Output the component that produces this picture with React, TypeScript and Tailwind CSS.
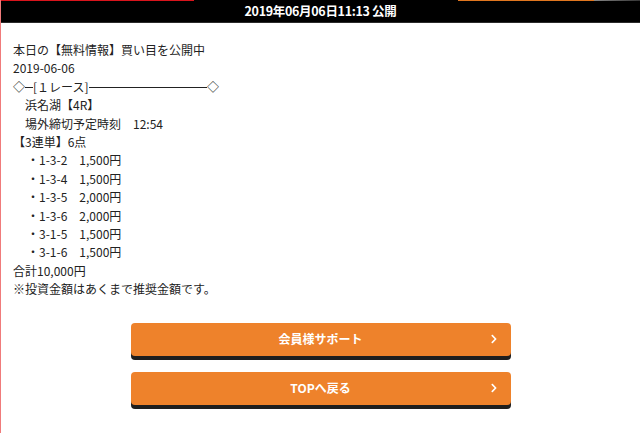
import { FaChevronRight } from "react-icons/fa";

const bets = [
  ["1-3-2", "1,500円"],
  ["1-3-4", "1,500円"],
  ["1-3-5", "2,000円"],
  ["1-3-6", "2,000円"],
  ["3-1-5", "1,500円"],
  ["3-1-6", "1,500円"],
];

function OrangeButton({ label }: { label: string }) {
  return (
    <a
      href="#"
      className="relative flex h-[33px] w-[380px] items-center justify-center rounded-[4px] bg-[#ee822b] text-[12px] font-bold text-white shadow-[0_4px_0_#1e1e1e]"
    >
      {label}
      <FaChevronRight className="absolute right-[12px] top-1/2 -translate-y-1/2 text-[10px]" />
    </a>
  );
}

export default function App() {
  return (
    <div
      className="min-h-[433px] w-[640px] border-l border-[#f07b7b] bg-white text-[#222]"
      style={{ fontFamily: '"Noto Sans CJK JP", "Noto Sans", sans-serif' }}
    >
      {/* header bar */}
      <div className="relative h-[23px] border-b border-[#2a2a2a] bg-black">
        <div className="absolute left-0 top-0 h-px w-[193px] bg-[#d9141c]" />
        <div className="absolute left-[457px] top-0 h-px w-[136px] bg-[#e0761f]" />
        <div className="absolute left-[593px] top-0 h-px w-[47px] bg-gradient-to-r from-[#888] to-[#333]" />
        <div className="flex h-full items-center justify-center text-[12.5px] font-bold tracking-tight text-white">
          2019年06月06日11:13 公開
        </div>
      </div>

      <div className="px-[12px] pt-[18px] text-[12px] leading-[18.4px]">
        <p>本日の【無料情報】買い目を公開中</p>
        <p>2019-06-06</p>
        <div className="flex w-[206px] items-center">
          <span>◇</span>
          <span className="h-px w-[8px] bg-[#222]" />
          <span>[１レース]</span>
          <span className="h-px flex-1 bg-[#222]" />
          <span>◇</span>
        </div>
        <p className="pl-[12px]">浜名湖【4R】</p>
        <p className="pl-[12px]">場外締切予定時刻　12:54</p>
        <p>【3連単】6点</p>
        {bets.map(([combo, amount]) => (
          <p key={combo} className="pl-[14px]">
            ・{combo}　{amount}
          </p>
        ))}
        <p>合計10,000円</p>
        <p>※投資金額はあくまで推奨金額です。</p>
      </div>

      <div className="mt-[24px] flex flex-col items-center gap-[16px]">
        <OrangeButton label="会員様サポート" />
        <OrangeButton label="TOPへ戻る" />
      </div>
    </div>
  );
}
